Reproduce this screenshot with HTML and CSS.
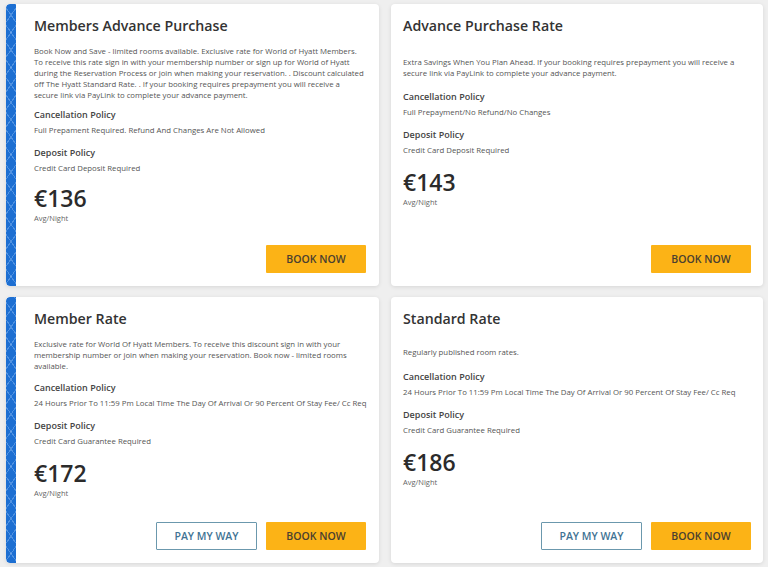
FILE: index.html
```html
<!DOCTYPE html>
<html lang="en">
<head>
<meta charset="utf-8">
<title>Rates</title>
<link rel="stylesheet" href="styles.css">
</head>
<body>
<main class="rates">
  <section class="card card--member">
    <div class="stripe"></div>
    <div class="content">
      <h2 class="title">Members Advance Purchase</h2>
      <p class="desc desc--long">Book Now and Save - limited rooms available. Exclusive rate for World of Hyatt Members. To receive this rate sign in with your membership number or sign up for World of Hyatt during the Reservation Process or join when making your reservation. . Discount calculated off The Hyatt Standard Rate. . If your booking requires prepayment you will receive a secure link via PayLink to complete your advance payment.</p>
      <h3 class="policy-title">Cancellation Policy</h3>
      <p class="policy">Full Prepament Required. Refund And Changes Are Not Allowed</p>
      <h3 class="policy-title policy-title--next">Deposit Policy</h3>
      <p class="policy">Credit Card Deposit Required</p>
      <div class="price">€136</div>
      <div class="per">Avg/Night</div>
      <div class="actions">
        <button class="btn btn--book">BOOK NOW</button>
      </div>
    </div>
  </section>

  <section class="card">
    <div class="content">
      <h2 class="title">Advance Purchase Rate</h2>
      <p class="desc desc--plain desc--spaced">Extra Savings When You Plan Ahead. If your booking requires prepayment you will receive a secure link via PayLink to complete your advance payment.</p>
      <h3 class="policy-title">Cancellation Policy</h3>
      <p class="policy">Full Prepayment/No Refund/No Changes</p>
      <h3 class="policy-title policy-title--next">Deposit Policy</h3>
      <p class="policy">Credit Card Deposit Required</p>
      <div class="price">€143</div>
      <div class="per">Avg/Night</div>
      <div class="actions">
        <button class="btn btn--book">BOOK NOW</button>
      </div>
    </div>
  </section>

  <section class="card card--member">
    <div class="stripe"></div>
    <div class="content">
      <h2 class="title">Member Rate</h2>
      <p class="desc">Exclusive rate for World Of Hyatt Members. To receive this discount sign in with your membership number or join when making your reservation. Book now - limited rooms available.</p>
      <h3 class="policy-title">Cancellation Policy</h3>
      <p class="policy">24 Hours Prior To 11:59 Pm Local Time The Day Of Arrival Or 90 Percent Of Stay Fee/ Cc Req</p>
      <h3 class="policy-title policy-title--next">Deposit Policy</h3>
      <p class="policy">Credit Card Guarantee Required</p>
      <div class="price">€172</div>
      <div class="per">Avg/Night</div>
      <div class="actions">
        <button class="btn btn--pay">PAY MY WAY</button>
        <button class="btn btn--book">BOOK NOW</button>
      </div>
    </div>
  </section>

  <section class="card">
    <div class="content">
      <h2 class="title">Standard Rate</h2>
      <p class="desc desc--plain">Regularly published room rates.</p>
      <h3 class="policy-title">Cancellation Policy</h3>
      <p class="policy">24 Hours Prior To 11:59 Pm Local Time The Day Of Arrival Or 90 Percent Of Stay Fee/ Cc Req</p>
      <h3 class="policy-title policy-title--next">Deposit Policy</h3>
      <p class="policy">Credit Card Guarantee Required</p>
      <div class="price">€186</div>
      <div class="per">Avg/Night</div>
      <div class="actions">
        <button class="btn btn--pay">PAY MY WAY</button>
        <button class="btn btn--book">BOOK NOW</button>
      </div>
    </div>
  </section>
</main>
</body>
</html>
```

FILE: styles.css
```css
* { box-sizing: border-box; }

html, body {
  margin: 0;
  background: #efefef;
}

body {
  font-family: "Open Sans", "Liberation Sans", sans-serif;
  color: #333;
  width: 768px;
  height: 567px;
  overflow: hidden;
}

.rates {
  display: grid;
  grid-template-columns: 373px 372px;
  grid-template-rows: 282px 266px;
  column-gap: 12px;
  row-gap: 11px;
  padding: 4px 0 0 6px;
}

.card {
  display: flex;
  background: #fff;
  border-radius: 4px;
  box-shadow: 0 1px 4px rgba(0, 0, 0, 0.10);
  overflow: hidden;
}

.stripe {
  flex: 0 0 10px;
  border-radius: 4px 0 0 4px;
  background:
    repeating-linear-gradient(55deg, transparent 0 9px, rgba(130, 180, 240, 0.5) 9px 10px),
    repeating-linear-gradient(-55deg, transparent 0 9px, rgba(130, 180, 240, 0.5) 9px 10px),
    #1d6fd2;
}

.content {
  flex: 1;
  display: flex;
  flex-direction: column;
  padding: 12px 12px 13px 12px;
  min-width: 0;
}

.card--member .content {
  padding-left: 18px;
  padding-right: 13px;
}

.title {
  margin: 0;
  font-size: 14.2px;
  line-height: 20px;
  font-weight: 600;
  color: #333;
}

.desc {
  margin: 10px 0 0;
  font-size: 7.8px;
  line-height: 11px;
  color: #555;
}

.desc--long {
  margin-bottom: -2px;
}

.desc--plain {
  margin-top: 18px;
  margin-bottom: 3px;
}

.desc--spaced {
  margin-top: 21px;
  margin-bottom: 2px;
}

.policy-title {
  margin: 9px 0 0;
  font-size: 9px;
  line-height: 14px;
  font-weight: 600;
  color: #444;
}

.policy-title--next {
  margin-top: 10px;
}

.policy {
  margin: 2px 0 0;
  font-size: 7.8px;
  line-height: 12px;
  color: #555;
  white-space: nowrap;
}

.price {
  margin-top: 12px;
  font-size: 23px;
  line-height: 28px;
  font-weight: 600;
  color: #2b2b2b;
}

.desc--long ~ .price {
  margin-top: 10px;
}

.per {
  font-size: 7.5px;
  line-height: 12px;
  color: #666;
}

.actions {
  margin-top: auto;
  display: flex;
  justify-content: flex-end;
  gap: 9px;
}

.btn {
  height: 28px;
  font-family: "Open Sans", "Liberation Sans", sans-serif;
  font-size: 10.5px;
  font-weight: 600;
  border-radius: 1px;
  padding: 0;
  cursor: pointer;
}

.btn--book {
  width: 100px;
  background: #fcb316;
  border: 0;
  color: #4a4030;
}

.btn--pay {
  width: 101px;
  background: #fff;
  border: 1px solid #6b98ad;
  color: #3f7394;
}
```
